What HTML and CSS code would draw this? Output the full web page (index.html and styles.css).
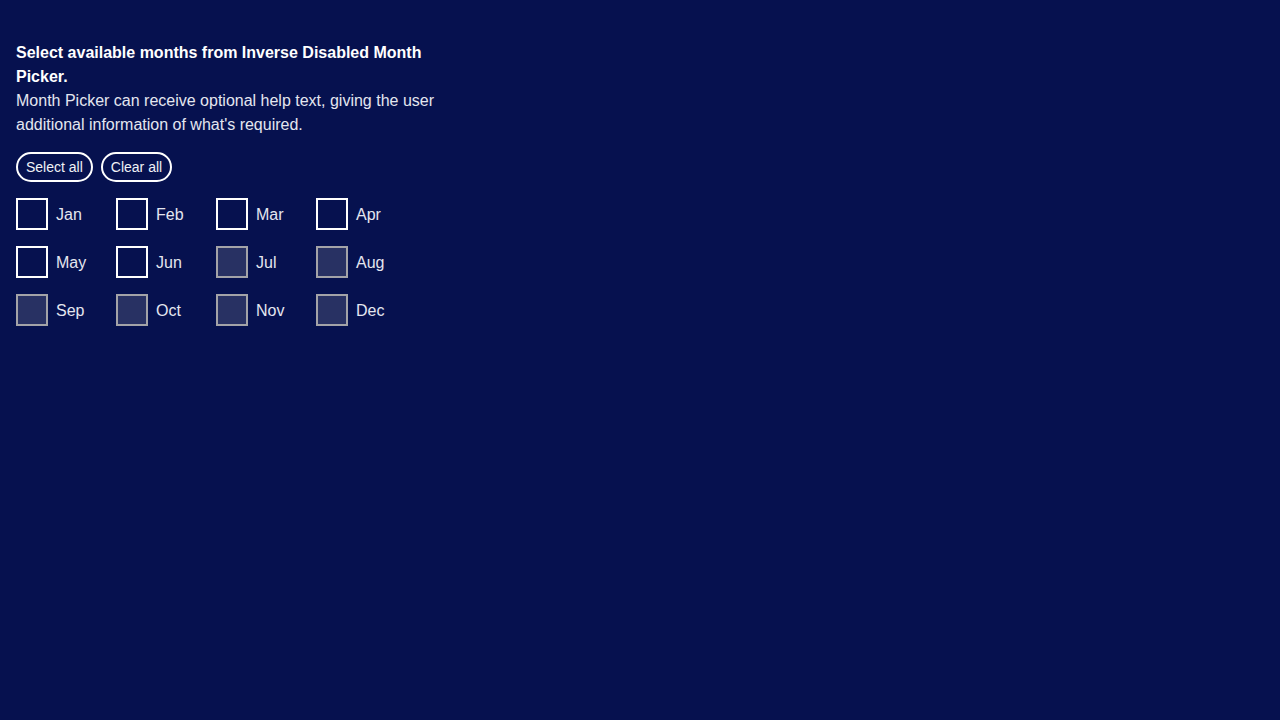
FILE: index.html
```html
<!DOCTYPE html>
<html lang="en">
<head>
<meta charset="utf-8">
<title>Month Picker</title>
<link rel="stylesheet" href="styles.css">
</head>
<body>
<main class="page">
  <fieldset class="picker">
    <legend class="legend">
      <span class="title">Select available months from Inverse Disabled Month Picker.</span>
      <span class="help">Month Picker can receive optional help text, giving the user additional information of what's required.</span>
    </legend>
    <div class="actions">
      <button class="pill" type="button">Select all</button>
      <button class="pill" type="button">Clear all</button>
    </div>
    <div class="months">
      <label class="month"><span class="box"></span><span class="name">Jan</span></label>
      <label class="month"><span class="box"></span><span class="name">Feb</span></label>
      <label class="month"><span class="box"></span><span class="name">Mar</span></label>
      <label class="month"><span class="box"></span><span class="name">Apr</span></label>
      <label class="month"><span class="box"></span><span class="name">May</span></label>
      <label class="month"><span class="box"></span><span class="name">Jun</span></label>
      <label class="month is-disabled"><span class="box"></span><span class="name">Jul</span></label>
      <label class="month is-disabled"><span class="box"></span><span class="name">Aug</span></label>
      <label class="month is-disabled"><span class="box"></span><span class="name">Sep</span></label>
      <label class="month is-disabled"><span class="box"></span><span class="name">Oct</span></label>
      <label class="month is-disabled"><span class="box"></span><span class="name">Nov</span></label>
      <label class="month is-disabled"><span class="box"></span><span class="name">Dec</span></label>
    </div>
  </fieldset>
</main>
</body>
</html>
```
FILE: styles.css
```css
* { box-sizing: border-box; }
html, body {
  margin: 0;
  height: 100%;
  background: #06114f;
  font-family: "Liberation Sans", Arial, sans-serif;
  color: #e4e6ef;
}
.page {
  padding: 40px 16px;
}
.picker {
  border: 0;
  margin: 0;
  padding: 0;
  min-width: 0;
}
.legend {
  padding: 1px 0 0;
  width: 440px;
  font-size: 16px;
  line-height: 24px;
}
.title {
  display: block;
  font-weight: 700;
  color: #ffffff;
}
.help {
  display: block;
  color: #e4e6ef;
}
.actions {
  display: flex;
  gap: 8px;
  margin-top: 15px;
}
.pill {
  font-family: "Liberation Sans", Arial, sans-serif;
  font-size: 14px;
  line-height: 16px;
  color: #f0f1f6;
  background: transparent;
  border: 2px solid #ffffff;
  border-radius: 16px;
  padding: 5px 8px;
  height: 30px;
  cursor: pointer;
}
.months {
  display: grid;
  grid-template-columns: repeat(4, 84px);
  column-gap: 16px;
  row-gap: 16px;
  margin-top: 16px;
}
.month {
  display: flex;
  align-items: center;
  gap: 8px;
  height: 32px;
  font-size: 16px;
  color: #e4e6ef;
}
.name {
  padding-top: 2px;
}
.box {
  width: 32px;
  height: 32px;
  border: 2px solid #ffffff;
  flex: none;
}
.is-disabled .box {
  border-color: #a3a3a8;
  background: #283163;
}
```
